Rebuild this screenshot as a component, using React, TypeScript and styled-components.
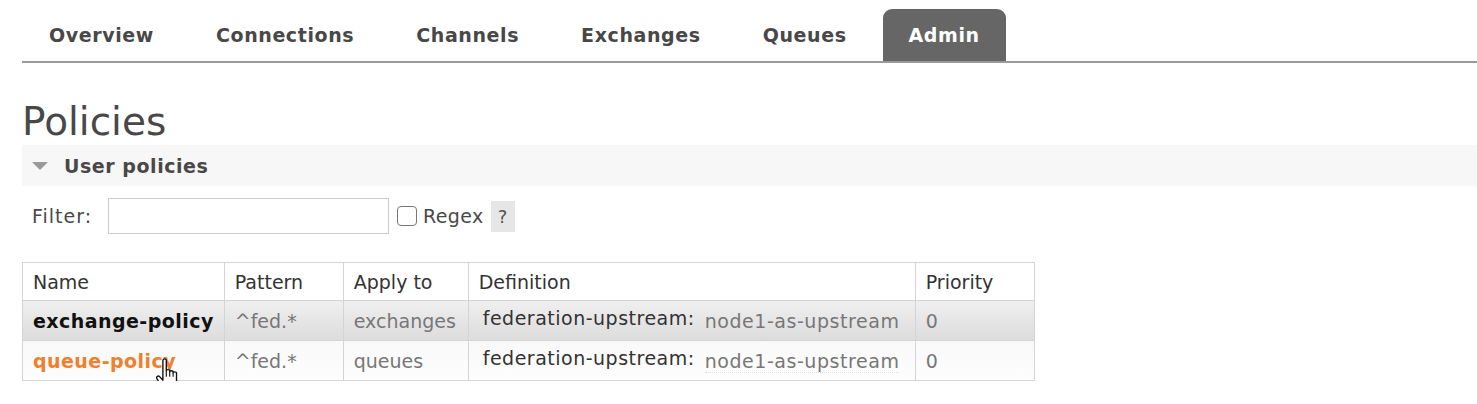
import React from "react";
import styled, { createGlobalStyle } from "styled-components";

const GlobalStyle = createGlobalStyle`
    body {
        margin: 0;
        background: #ffffff;
        font-family: "DejaVu Sans", Verdana, sans-serif;
        color: #484848;
    }
`;

const Page = styled.div`
    padding: 9px 0 0 22px;
`;

const Tabs = styled.ul`
    display: flex;
    gap: 10px;
    margin: 0;
    padding: 0;
    list-style: none;
    border-bottom: 2px solid #9a9a9a;
`;

const Tab = styled.li<{ active?: boolean }>`
    display: flex;
    align-items: center;
    height: 52px;
    padding: 0 26px;
    font-size: 19px;
    font-weight: bold;
    letter-spacing: 0.6px;
    color: ${(props: any) => (props.active ? "#ffffff" : "#484848")};
    background: ${(props: any) => (props.active ? "#666666" : "transparent")};
    border-radius: 9px 9px 0 0;
    &:first-child {
        padding-left: 27px;
    }
`;

const Title = styled.h1`
    margin: 36px 0 0 0;
    font-size: 39px;
    font-weight: normal;
    line-height: 46px;
    color: #484848;
`;

const SectionBar = styled.div`
    display: flex;
    align-items: center;
    gap: 16px;
    height: 41px;
    padding-left: 10px;
    background: #f7f7f7;
    font-size: 19px;
    font-weight: bold;
    letter-spacing: 0.55px;
    color: #484848;
`;

const Triangle = styled.span`
    width: 0;
    height: 0;
    border-left: 8px solid transparent;
    border-right: 8px solid transparent;
    border-top: 8px solid #9a9a9a;
`;

const FilterRow = styled.div`
    display: flex;
    align-items: center;
    margin: 12px 0 0 10px;
    font-size: 19px;
    letter-spacing: 0.4px;
    color: #484848;
`;

const FilterLabel = styled.span`
    width: 76px;
    letter-spacing: 1px;
`;

const FilterInput = styled.input`
    box-sizing: border-box;
    width: 281px;
    height: 36px;
    border: 1px solid #cccccc;
    margin: 0;
    font-size: 16px;
`;

const CheckBox = styled.span`
    box-sizing: border-box;
    width: 20px;
    height: 20px;
    margin: 0 6px 0 8px;
    border: 1px solid #767676;
    border-radius: 4px;
    background: #ffffff;
`;

const HelpBadge = styled.span`
    display: flex;
    align-items: center;
    justify-content: center;
    width: 24px;
    height: 31px;
    margin-left: 7px;
    background: #e6e6e6;
    color: #555555;
    font-size: 18px;
`;

const Table = styled.table`
    margin-top: 28px;
    border-collapse: collapse;
    table-layout: fixed;
    font-size: 19px;
    color: #484848;
`;

const HeadCell = styled.th<{ width: number }>`
    width: ${(props: any) => props.width}px;
    box-sizing: border-box;
    height: 38px;
    padding: 0 10px;
    text-align: left;
    font-weight: normal;
    border: 1px solid #d4d4d4;
    color: #333333;
`;

const Row = styled.tr<{ alt?: boolean }>`
    background: ${(props: any) =>
        props.alt ? "linear-gradient(#f9f9f9, #fdfdfd)" : "linear-gradient(#efefef, #dcdcdc)"};
`;

const Cell = styled.td<{ muted?: boolean }>`
    height: 40px;
    box-sizing: border-box;
    padding: 0 10px;
    border: 1px solid #d4d4d4;
    color: ${(props: any) => (props.muted ? "#777777" : "#484848")};
    white-space: nowrap;
`;

const NameLink = styled.span<{ hover?: boolean }>`
    position: relative;
    font-weight: bold;
    letter-spacing: 0.45px;
    color: ${(props: any) => (props.hover ? "#f07f2e" : "#111111")};
`;

const Cursor = styled.svg`
    position: absolute;
    left: 121px;
    top: 7px;
`;

const DefKey = styled.span`
    position: relative;
    top: -3px;
    margin-left: 4px;
    letter-spacing: 0.5px;
    color: #333333;
`;

const DefValue = styled.span`
    margin-left: 10px;
    letter-spacing: 0.55px;
    color: #777777;
    border-bottom: 1px dotted #dddddd;
`;

type Policy = {
    name: string;
    pattern: string;
    applyTo: string;
    upstream: string;
    priority: number;
};

const policies: Policy[] = [
    { name: "exchange-policy", pattern: "^fed.*", applyTo: "exchanges", upstream: "node1-as-upstream", priority: 0 },
    { name: "queue-policy", pattern: "^fed.*", applyTo: "queues", upstream: "node1-as-upstream", priority: 0 }
];

const tabs = ["Overview", "Connections", "Channels", "Exchanges", "Queues", "Admin"];

function HandCursor() {
    return (
        <Cursor width="28" height="34" viewBox="0 0 24 30">
            <path
                d="M7.5 3C7.5 1.2 10.5 1.2 10.5 3V12C10.5 10.8 13.5 10.8 13.5 12V13C13.5 11.8 16.5 11.8 16.5 13V14C16.5 12.8 19.5 12.8 19.5 14V21C19.5 25.5 17 28.5 13 28.5H11C8.5 28.5 7.2 27.5 6 25.5L2.2 19C1.4 17.5 3.4 16 4.6 17.3L7.5 20.5Z"
                fill="#ffffff"
                stroke="#111111"
                strokeWidth="1.2"
                strokeLinejoin="round"
            />
            <path d="M10.5 12V17.5M13.5 13V17.5M16.5 14V17.5" stroke="#111111" strokeWidth="1" />
        </Cursor>
    );
}

export default function App() {
    return (
        <Page>
            <GlobalStyle />
            <Tabs>
                {tabs.map(tab => (
                    <Tab key={tab} active={tab === "Admin"}>
                        {tab}
                    </Tab>
                ))}
            </Tabs>
            <Title>Policies</Title>
            <SectionBar>
                <Triangle />
                User policies
            </SectionBar>
            <FilterRow>
                <FilterLabel>Filter:</FilterLabel>
                <FilterInput type="text" />
                <CheckBox />
                Regex
                <HelpBadge>?</HelpBadge>
            </FilterRow>
            <Table>
                <thead>
                    <tr>
                        <HeadCell width={201}>Name</HeadCell>
                        <HeadCell width={119}>Pattern</HeadCell>
                        <HeadCell width={125}>Apply to</HeadCell>
                        <HeadCell width={447}>Definition</HeadCell>
                        <HeadCell width={119}>Priority</HeadCell>
                    </tr>
                </thead>
                <tbody>
                    {policies.map((policy, index) => (
                        <Row key={policy.name} alt={index % 2 === 1}>
                            <Cell>
                                <NameLink hover={index === 1}>
                                    {policy.name}
                                    {index === 1 && <HandCursor />}
                                </NameLink>
                            </Cell>
                            <Cell muted>{policy.pattern}</Cell>
                            <Cell muted>{policy.applyTo}</Cell>
                            <Cell>
                                <DefKey>federation-upstream:</DefKey>
                                <DefValue>{policy.upstream}</DefValue>
                            </Cell>
                            <Cell muted>{policy.priority}</Cell>
                        </Row>
                    ))}
                </tbody>
            </Table>
        </Page>
    );
}
